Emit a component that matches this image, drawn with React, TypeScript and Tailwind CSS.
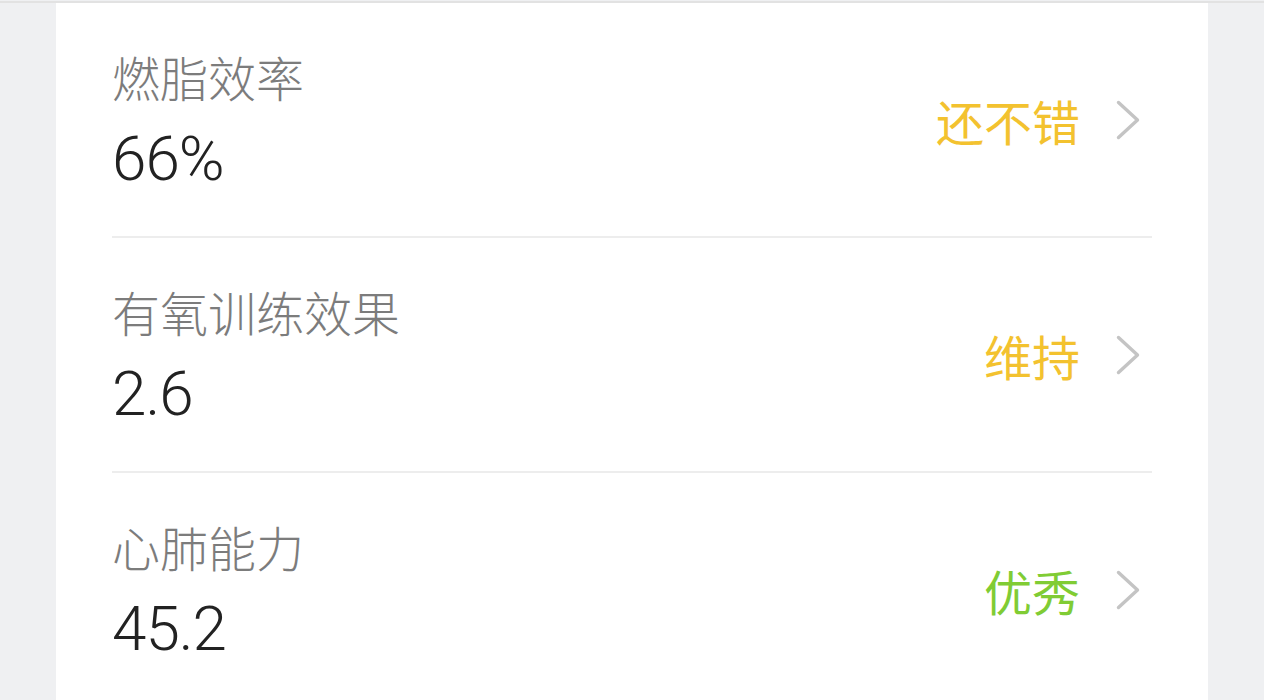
import React from "react";

const rows = [
  { label: "燃脂效率", value: "66%", status: "还不错", color: "text-[#f3c22f]" },
  { label: "有氧训练效果", value: "2.6", status: "维持", color: "text-[#f3c22f]" },
  { label: "心肺能力", value: "45.2", status: "优秀", color: "text-[#80cc34]" },
];

function Chevron() {
  return (
    <svg width="24" height="40" viewBox="0 0 24 40" fill="none" className="shrink-0">
      <path d="M2.5 2.5 L21.5 20 L2.5 37.5" stroke="#c4c4c4" strokeWidth="3.4" strokeLinecap="round" strokeLinejoin="round" />
    </svg>
  );
}

export default function App() {
  return (
    <div
      className="w-[1264px] h-[700px] overflow-hidden bg-[#eff0f2] pt-px"
      style={{ fontFamily: '"Noto Sans CJK SC", Roboto, sans-serif' }}
    >
      <div className="h-[2px] bg-[#e2e2e2]" />
      <div className="mx-[56px] bg-white px-[56px]">
        {rows.map((r, i) => (
          <div key={i}>
            {i > 0 && <div className="h-[2px] bg-[#ededed]" />}
            <div className="h-[233px] flex items-center">
              <div className="flex-1 flex flex-col">
                <div className="text-[48px] leading-[56px] font-light text-[#7c7c7c]">{r.label}</div>
                <div
                  className="text-[62px] leading-[64px] font-light tracking-[-1px] text-[#222222] mt-[23px]"
                  style={{ fontFamily: "Roboto, sans-serif" }}
                >
                  {r.value}
                </div>
              </div>
              <div className={`text-[48px] leading-[56px] font-normal ${r.color}`}>{r.status}</div>
              <div className="ml-[36px] mr-[12px] flex items-center">
                <Chevron />
              </div>
            </div>
          </div>
        ))}
      </div>
    </div>
  );
}
